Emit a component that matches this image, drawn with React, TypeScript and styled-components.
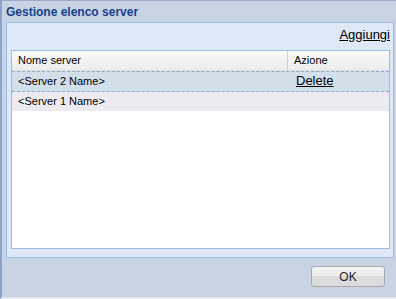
import React from "react";
import styled, { createGlobalStyle } from "styled-components";

const GlobalStyle = createGlobalStyle`
  html, body {
    margin: 0;
    padding: 0;
    background: #ffffff;
  }
  * {
    box-sizing: border-box;
  }
`;

const Window = styled.div`
  display: flex;
  flex-direction: column;
  width: 396px;
  height: 299px;
  background: #c8d4e3;
  border-top: 1px solid #97abc9;
  border-left: 2px solid #8aa3c8;
  border-bottom: 2px solid #e4e9f0;
  font-family: "Liberation Sans", Arial, sans-serif;
`;

const TitleBar = styled.div`
  height: 21px;
  padding: 4px 0 0 4px;
  font-size: 12px;
  font-weight: 700;
  color: #15428b;
`;

const Panel = styled.div`
  display: flex;
  flex-direction: column;
  margin-left: 4px;
  width: 388px;
  height: 236px;
  background: #dfe8f6;
  border: 1px solid #99bbe8;
  padding: 0 3px 8px 4px;
`;

const Toolbar = styled.div`
  display: flex;
  justify-content: flex-end;
  height: 27px;
  padding-top: 4px;
`;

const LinkText = styled.a`
  font-size: 13px;
  color: #000000;
  text-decoration: underline;
  cursor: pointer;
`;

const Grid = styled.div`
  flex: 1;
  background: #ffffff;
  border: 1px solid #99bbe8;
`;

const HeaderRow = styled.div`
  display: grid;
  grid-template-columns: 276px 1fr;
  height: 20px;
  background: linear-gradient(#fafafa, #ececec);
  border-bottom: 1px solid #dedede;
`;

const HeaderCell = styled.div<{ divider?: boolean }>`
  padding: 3px 0 0 6px;
  font-size: 11px;
  color: #000000;
  border-right: ${p => (p.divider ? "1px solid #d0d0d0" : "none")};
`;

const Row = styled.div<{ selected?: boolean }>`
  display: grid;
  grid-template-columns: 276px 1fr;
  height: ${p => (p.selected ? "21px" : "19px")};
  background: ${p => (p.selected ? "#d3dfea" : "#eeebf0")};
  border-top: ${p => (p.selected ? "1px dashed #8ea8d8" : "none")};
  border-bottom: ${p => (p.selected ? "1px dashed #8ea8d8" : "none")};
`;

const Cell = styled.div<{ action?: boolean }>`
  padding: ${p => (p.action ? "1px 0 0 8px" : "3px 0 0 6px")};
  font-size: 11px;
  color: #000000;
`;

const Footer = styled.div`
  flex: 1;
  display: flex;
  justify-content: flex-end;
  align-items: flex-start;
  padding: 8px 11px 0 0;
`;

const Button = styled.button`
  width: 74px;
  height: 21px;
  border: 1px solid #a9a9a9;
  border-radius: 3px;
  background: linear-gradient(#f4f4f4 0%, #ececec 50%, #dcdcdc 50%, #dcdcdc 100%);
  font-family: "Liberation Sans", Arial, sans-serif;
  font-size: 12px;
  color: #222222;
  padding: 0;
`;

const App: React.FC = () => {
  return (
    <>
      <GlobalStyle />
      <Window>
        <TitleBar>Gestione elenco server</TitleBar>
        <Panel>
          <Toolbar>
            <LinkText>Aggiungi</LinkText>
          </Toolbar>
          <Grid>
            <HeaderRow>
              <HeaderCell divider>Nome server</HeaderCell>
              <HeaderCell>Azione</HeaderCell>
            </HeaderRow>
            <Row selected>
              <Cell>&lt;Server 2 Name&gt;</Cell>
              <Cell action>
                <LinkText>Delete</LinkText>
              </Cell>
            </Row>
            <Row>
              <Cell>&lt;Server 1 Name&gt;</Cell>
              <Cell />
            </Row>
          </Grid>
        </Panel>
        <Footer>
          <Button>OK</Button>
        </Footer>
      </Window>
    </>
  );
};

export default App;
